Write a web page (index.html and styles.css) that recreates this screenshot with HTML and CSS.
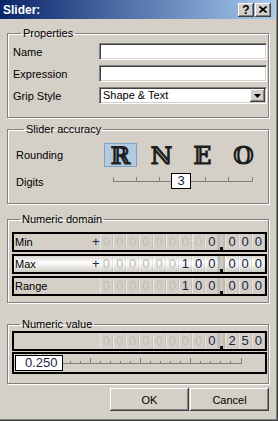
FILE: index.html
```html
<!DOCTYPE html>
<html lang="en">
<head>
    <meta charset="UTF-8">
    <meta name="viewport" content="width=device-width, initial-scale=1.0">
    <title>Slider</title>
    <link rel="stylesheet" href="styles.css">
</head>
<body>
    <div class="window">
        <div class="titlebar">
            <span class="title">Slider:</span>
            <div class="caption-buttons">
                <button class="caption-btn help">?</button>
                <button class="caption-btn">
                    <svg width="8" height="7" viewBox="0 0 8 7"><path d="M0.5 0.5 L7.5 6.5 M7.5 0.5 L0.5 6.5" stroke="#000" stroke-width="1.7"/></svg>
                </button>
            </div>
        </div>

        <div class="client">
            <fieldset class="group group-props">
                <legend>Properties</legend>
                <div class="props">
                    <label for="name">Name</label>
                    <input type="text" id="name" class="field">
                    <label for="expression">Expression</label>
                    <input type="text" id="expression" class="field">
                    <label>Grip Style</label>
                    <div class="field combo">
                        <span class="combo-text">Shape &amp; Text</span>
                        <span class="combo-btn">
                            <svg width="7" height="4" viewBox="0 0 7 4"><path d="M0 0 H7 L3.5 4 Z" fill="#000"/></svg>
                        </span>
                    </div>
                </div>
            </fieldset>

            <fieldset class="group group-accuracy">
                <legend>Slider accuracy</legend>
                <div class="acc-row rounding">
                    <span class="acc-label">Rounding</span>
                    <div class="modes">
                        <span class="mode active">ℝ</span>
                        <span class="mode">ℕ</span>
                        <span class="mode">𝔼</span>
                        <span class="mode">𝕆</span>
                    </div>
                </div>
                <div class="acc-row digits">
                    <span class="acc-label">Digits</span>
                    <div class="digits-slider">
                        <svg width="156" height="17" viewBox="0 0 156 17">
                            <rect x="9" y="8" width="140" height="1" fill="#808080"/>
                            <rect x="9" y="4" width="1" height="4" fill="#808080"/>
                            <rect x="32" y="4" width="1" height="4" fill="#808080"/>
                            <rect x="55" y="4" width="1" height="4" fill="#808080"/>
                            <rect x="78" y="4" width="1" height="4" fill="#808080"/>
                            <rect x="101" y="4" width="1" height="4" fill="#808080"/>
                            <rect x="124" y="4" width="1" height="4" fill="#808080"/>
                            <rect x="148" y="4" width="1" height="4" fill="#808080"/>
                        </svg>
                        <span class="thumb">3</span>
                    </div>
                </div>
            </fieldset>

            <fieldset class="group group-domain">
                <legend>Numeric domain</legend>
                <div class="num-rows">
                    <div class="num-row">
                        <span class="num-label">Min</span>
                        <span class="sign">+</span>
                        <span class="cell off">0</span><span class="cell off">0</span><span class="cell off">0</span>
                        <span class="cell off">0</span><span class="cell off">0</span><span class="cell off">0</span>
                        <span class="cell off">0</span><span class="cell off">0</span><span class="cell">0</span>
                        <span class="dec"></span>
                        <span class="cell">0</span><span class="cell">0</span><span class="cell">0</span>
                    </div>
                    <div class="num-row hot">
                        <span class="num-label">Max</span>
                        <span class="sign">+</span>
                        <span class="cell off">0</span><span class="cell off">0</span><span class="cell off">0</span>
                        <span class="cell off">0</span><span class="cell off">0</span><span class="cell off">0</span>
                        <span class="cell">1</span><span class="cell">0</span><span class="cell">0</span>
                        <span class="dec"></span>
                        <span class="cell">0</span><span class="cell">0</span><span class="cell">0</span>
                    </div>
                    <div class="num-row">
                        <span class="num-label">Range</span>
                        <span class="cell off">0</span><span class="cell off">0</span><span class="cell off">0</span>
                        <span class="cell off">0</span><span class="cell off">0</span><span class="cell off">0</span>
                        <span class="cell">1</span><span class="cell">0</span><span class="cell">0</span>
                        <span class="dec"></span>
                        <span class="cell">0</span><span class="cell">0</span><span class="cell">0</span>
                    </div>
                </div>
            </fieldset>

            <fieldset class="group group-value">
                <legend>Numeric value</legend>
                <div class="num-rows tight">
                    <div class="num-row">
                        <span class="num-label"></span>
                        <span class="cell off">0</span><span class="cell off">0</span><span class="cell off">0</span>
                        <span class="cell off">0</span><span class="cell off">0</span><span class="cell off">0</span>
                        <span class="cell off">0</span><span class="cell off">0</span><span class="cell">0</span>
                        <span class="dec"></span>
                        <span class="cell">2</span><span class="cell">5</span><span class="cell">0</span>
                    </div>
                    <div class="num-row slider-row">
                        <span class="value-box">0.250</span>
                        <svg width="180" height="18" viewBox="0 0 180 18">
                            <rect x="0" y="9" width="179" height="1" fill="#808080"/>
                            <rect x="7" y="7" width="1" height="2" fill="#808080"/>
                            <rect x="17" y="7" width="1" height="2" fill="#808080"/>
                            <rect x="27" y="4" width="1" height="5" fill="#808080"/>
                            <rect x="37" y="7" width="1" height="2" fill="#808080"/>
                            <rect x="47" y="7" width="1" height="2" fill="#808080"/>
                            <rect x="57" y="7" width="1" height="2" fill="#808080"/>
                            <rect x="67" y="7" width="1" height="2" fill="#808080"/>
                            <rect x="77" y="4" width="1" height="5" fill="#808080"/>
                            <rect x="87" y="7" width="1" height="2" fill="#808080"/>
                            <rect x="97" y="7" width="1" height="2" fill="#808080"/>
                            <rect x="107" y="7" width="1" height="2" fill="#808080"/>
                            <rect x="117" y="7" width="1" height="2" fill="#808080"/>
                            <rect x="127" y="4" width="1" height="5" fill="#808080"/>
                            <rect x="137" y="7" width="1" height="2" fill="#808080"/>
                            <rect x="147" y="7" width="1" height="2" fill="#808080"/>
                            <rect x="157" y="7" width="1" height="2" fill="#808080"/>
                            <rect x="167" y="7" width="1" height="2" fill="#808080"/>
                            <rect x="178" y="4" width="1" height="5" fill="#808080"/>
                        </svg>
                    </div>
                </div>
            </fieldset>

            <div class="actions">
                <button class="btn">OK</button>
                <button class="btn">Cancel</button>
            </div>
        </div>
    </div>
</body>
</html>
```

FILE: styles.css
```css
body {
    margin: 0;
    background-color: #d4d0c8;
    font-family: "Liberation Sans", Arial, sans-serif;
    font-size: 11px;
    color: #000;
}
.window {
    width: 278px;
    height: 421px;
    box-sizing: border-box;
    border-right: 1px solid #404040;
    border-bottom: 1px solid #404040;
    box-shadow: inset -1px -1px 0 #808080;
    display: flex;
    flex-direction: column;
}

/* title bar */
.titlebar {
    height: 19px;
    margin-right: 2px;
    padding: 0 4px 0 3px;
    background: linear-gradient(to right, #0a246a, #a6caf0);
    display: flex;
    align-items: center;
    justify-content: space-between;
}
.title {
    color: #fff;
    font-weight: bold;
    font-size: 12px;
}
.caption-buttons {
    display: flex;
    gap: 1px;
}
.caption-btn {
    width: 16px;
    height: 14px;
    padding: 0;
    border: none;
    background-color: #d4d0c8;
    box-shadow: inset -1px -1px 0 #404040, inset 1px 1px 0 #fff, inset -2px -2px 0 #808080;
    display: flex;
    align-items: center;
    justify-content: center;
}
.caption-btn.help {
    font-family: "Liberation Sans", Arial, sans-serif;
    font-weight: bold;
    font-size: 12px;
    line-height: 12px;
    color: #000;
}

.client {
    flex: 1;
    padding: 0 8px 0 7px;
    display: flex;
    flex-direction: column;
}

/* group boxes */
.group {
    margin: 0;
    padding: 0;
    min-width: 0;
    border: 1px solid #808080;
    box-shadow: inset 1px 1px 0 #fff, 1px 1px 0 #fff;
}
.group legend {
    margin-left: 8px;
    padding: 0 2px;
    font-size: 11px;
    line-height: 13px;
}
.group-props {
    margin-top: 8px;
    padding: 3px 1px 13px 5px;
}
.group-accuracy {
    margin-top: 5px;
    padding: 7px 1px 13px 8px;
}
.group-domain {
    margin-top: 9px;
    padding: 6px 1px 6px 4px;
}
.group-value {
    margin-top: 15px;
    padding: 0 1px 9px 4px;
}

/* properties */
.props {
    display: grid;
    grid-template-columns: 86px 1fr;
    row-gap: 5px;
    align-items: center;
}
.field {
    box-sizing: border-box;
    width: 100%;
    height: 17px;
    margin: 0;
    padding: 0 3px;
    background-color: #fff;
    border: 1px solid;
    border-color: #808080 #fff #fff #808080;
    box-shadow: inset 1px 1px 0 #404040, inset -1px -1px 0 #d4d0c8;
    font: inherit;
}
.combo {
    display: flex;
    align-items: stretch;
    padding: 1px 1px 1px 3px;
}
.combo-text {
    flex: 1;
    line-height: 13px;
}
.combo-btn {
    width: 15px;
    background-color: #d4d0c8;
    box-shadow: inset -1px -1px 0 #404040, inset 1px 1px 0 #fff, inset -2px -2px 0 #808080;
    display: flex;
    align-items: center;
    justify-content: center;
}

/* slider accuracy */
.acc-row {
    display: flex;
    align-items: center;
}
.acc-row.digits {
    margin-top: 6px;
}
.acc-label {
    width: 88px;
}
.modes {
    display: flex;
    gap: 8px;
}
.mode {
    width: 33px;
    height: 24px;
    box-sizing: border-box;
    border: 1px solid transparent;
    display: flex;
    align-items: center;
    justify-content: center;
    font-family: "DejaVu Serif", serif;
    font-weight: bold;
    font-size: 24px;
    color: #1e1e1e;
}
.mode.active {
    background-color: #b4cbdf;
    border-color: #7ea3c4;
}
.digits-slider {
    position: relative;
    width: 156px;
    height: 17px;
}
.digits-slider svg {
    display: block;
}
.thumb {
    position: absolute;
    left: 67px;
    top: 0;
    width: 20px;
    height: 16px;
    box-sizing: border-box;
    border: 1px solid #000;
    background-color: #fff;
    text-align: center;
    font-size: 13px;
    line-height: 14px;
    color: #1a2446;
}

/* numeric rows */
.num-rows {
    display: flex;
    flex-direction: column;
    gap: 2px;
}
.num-rows.tight {
    gap: 1px;
}
.num-row {
    display: flex;
    height: 20px;
    box-sizing: border-box;
    border: 2px solid #000;
    background-color: #d4d0c8;
    font-size: 13px;
    line-height: 16px;
}
.num-row.hot {
    background: linear-gradient(#d8d6d0, #fdfdfd 40%, #f0efec 60%, #cdcbc5);
}
.num-label {
    flex: 1;
    padding-left: 1px;
    font-size: 11px;
}
.sign {
    width: 8px;
    text-align: center;
    color: #1a2446;
}
.cell {
    flex: none;
    width: 13.2px;
    text-align: center;
    color: #1a2446;
    box-shadow: inset 1px 0 0 rgba(255, 255, 255, 0.45), inset -1px 0 0 rgba(0, 0, 0, 0.07);
}
.cell.off {
    color: #c0bcb4;
}
.dec {
    flex: none;
    width: 7px;
    background: linear-gradient(to right, #b6b2aa, #d0cdc6, #b6b2aa);
    display: flex;
    justify-content: center;
    align-items: flex-end;
}
.dec::after {
    content: "";
    width: 3px;
    height: 3px;
    background-color: #111;
}
.slider-row {
    height: 22px;
    align-items: center;
}
.slider-row svg {
    display: block;
}
.value-box {
    margin: 0 0 0 1px;
    width: 48px;
    height: 16px;
    box-sizing: border-box;
    border: 1px solid #000;
    background-color: #fff;
    padding-left: 9px;
    line-height: 14px;
    color: #1a2446;
}

/* buttons */
.actions {
    display: flex;
    justify-content: flex-end;
    gap: 1px;
    margin-top: 4px;
}
.btn {
    width: 79px;
    height: 23px;
    padding: 0;
    border: none;
    background-color: #d4d0c8;
    box-shadow: inset -1px -1px 0 #404040, inset 1px 1px 0 #fff, inset -2px -2px 0 #808080;
    font-family: "Liberation Sans", Arial, sans-serif;
    font-size: 11px;
    color: #000;
}
```
